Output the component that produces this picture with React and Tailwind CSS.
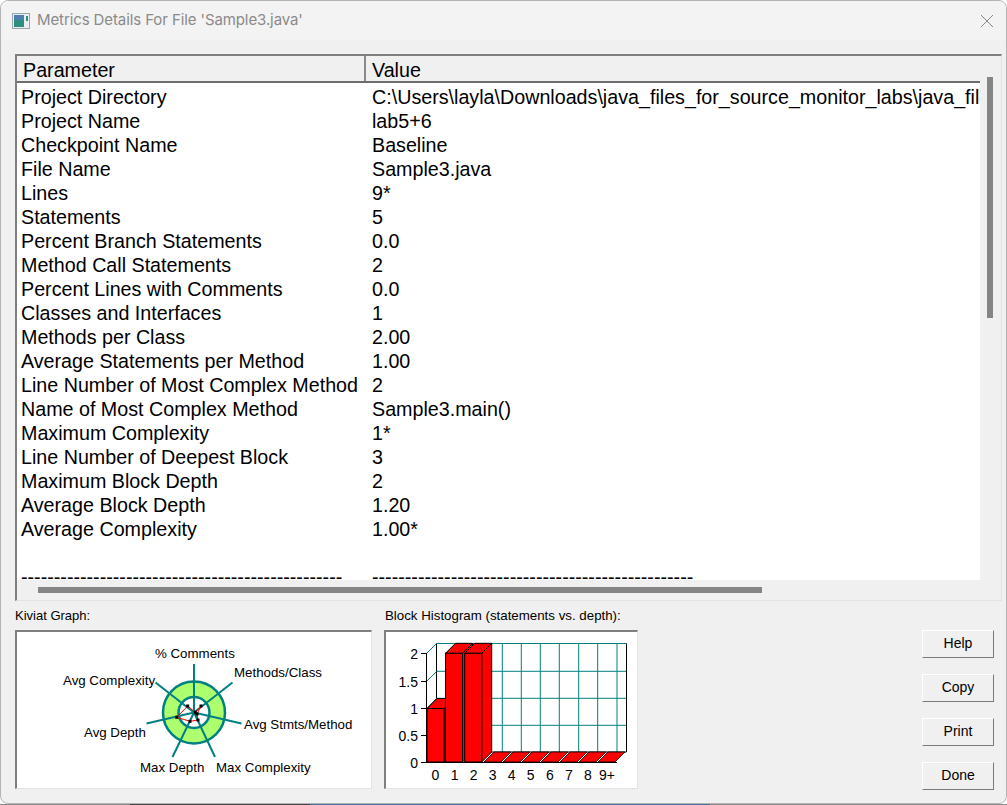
import React from "react";

const dashes = "-------------------------------------------------";

const rows = [
  ["Project Directory", "C:\\Users\\layla\\Downloads\\java_files_for_source_monitor_labs\\java_files_for_source_monitor_labs"],
  ["Project Name", "lab5+6"],
  ["Checkpoint Name", "Baseline"],
  ["File Name", "Sample3.java"],
  ["Lines", "9*"],
  ["Statements", "5"],
  ["Percent Branch Statements", "0.0"],
  ["Method Call Statements", "2"],
  ["Percent Lines with Comments", "0.0"],
  ["Classes and Interfaces", "1"],
  ["Methods per Class", "2.00"],
  ["Average Statements per Method", "1.00"],
  ["Line Number of Most Complex Method", "2"],
  ["Name of Most Complex Method", "Sample3.main()"],
  ["Maximum Complexity", "1*"],
  ["Line Number of Deepest Block", "3"],
  ["Maximum Block Depth", "2"],
  ["Average Block Depth", "1.20"],
  ["Average Complexity", "1.00*"],
  ["", ""],
  [dashes, dashes],
];

// spokes of the kiviat graph, page coordinates
const spokes = [
  [194, 664],
  [232.5, 682.5],
  [241.5, 723.5],
  [215, 757],
  [172.5, 757],
  [146.5, 723.5],
  [155.5, 682.5],
];

const kiviatLabels = [
  ["% Comments", 155, 658],
  ["Methods/Class", 234, 677],
  ["Avg Complexity", 63, 685],
  ["Avg Stmts/Method", 244, 729],
  ["Avg Depth", 84, 737],
  ["Max Depth", 140, 772],
  ["Max Complexity", 216, 772],
];

const redPoints = [
  [195.3, 712.3],
  [201, 706],
  [197, 714],
  [198, 720],
  [190, 721.3],
  [176.7, 717.3],
  [187.7, 706],
];

function Kiviat() {
  return (
    <svg viewBox="17 632 354 156" className="block w-[354px] h-[156px]">
      <circle cx="194" cy="712.5" r="31" fill="#adff70" stroke="#008080" strokeWidth="2.5" />
      <circle cx="194" cy="712.5" r="15.5" fill="#ffffff" stroke="#008080" strokeWidth="2.5" />
      {spokes.map(([x, y], i) => (
        <line key={i} x1="194" y1="712.5" x2={x} y2={y} stroke="#008080" strokeWidth="2" />
      ))}
      <polygon
        points={redPoints.map((p) => p.join(",")).join(" ")}
        fill="none"
        stroke="#ff0000"
        strokeWidth="1"
      />
      {redPoints.map(([x, y], i) => (
        <rect key={i} x={x - 1.5} y={y - 1.5} width="3" height="3" fill="#000000" />
      ))}
      {kiviatLabels.map(([t, x, y]) => (
        <text key={t} x={x} y={y} fontSize="13.3" fill="#000000" fontFamily="Liberation Sans, Arial, sans-serif">
          {t}
        </text>
      ))}
    </svg>
  );
}

const gridX = [502.3, 521.3, 540.3, 559.3, 578.7, 597.7, 617];
const gridY = [671.3, 698.3, 725.3];
const floorX = [484, 503, 522, 541, 560, 579, 598];

function Histogram() {
  const bars = [
    { x: 427, top: 708.5 },
    { x: 445.5, top: 653.3 },
    { x: 464.7, top: 653.3 },
  ];
  return (
    <svg viewBox="386 632 250 156" className="block w-[250px] h-[156px]">
      {/* back wall */}
      {gridX.map((x) => (
        <line key={x} x1={x} y1="643.5" x2={x} y2="752" stroke="#008080" />
      ))}
      {gridY.map((y) => (
        <line key={y} x1="436.5" y1={y} x2="626.5" y2={y} stroke="#008080" />
      ))}
      <line x1="436.5" y1="643.5" x2="626.5" y2="643.5" stroke="#008080" />
      <line x1="436.5" y1="643.5" x2="436.5" y2="752" stroke="#000000" />
      <line x1="626.5" y1="643.5" x2="626.5" y2="752" stroke="#000000" />
      <line x1="436.5" y1="752" x2="626.5" y2="752" stroke="#000000" />
      {/* left wall */}
      <line x1="426.5" y1="653.5" x2="436.5" y2="643.5" stroke="#008080" />
      <line x1="426.5" y1="681.5" x2="436.5" y2="671.5" stroke="#008080" />
      <line x1="426.5" y1="708.5" x2="436.5" y2="698.5" stroke="#008080" />
      <line x1="426.5" y1="735.5" x2="436.5" y2="725.5" stroke="#008080" />
      <line x1="426.5" y1="653" x2="426.5" y2="762.5" stroke="#000000" />
      {/* empty bars on the floor */}
      {floorX.map((x) => (
        <polygon
          key={x}
          points={`${x},762 ${x + 10},752 ${x + 27},752 ${x + 17},762`}
          fill="#ff0000"
          stroke="#000000"
          strokeWidth="0.8"
        />
      ))}
      {/* filled bars, each one covers the side of the one before */}
      {bars.map((b) => (
        <g key={b.x} stroke="#000000" strokeWidth="1" fill="#ff0000">
          <polygon points={`${b.x + 17},${b.top} ${b.x + 27},${b.top - 10} ${b.x + 27},752 ${b.x + 17},762`} />
          <polygon points={`${b.x},${b.top} ${b.x + 10},${b.top - 10} ${b.x + 27},${b.top - 10} ${b.x + 17},${b.top}`} />
          <rect x={b.x} y={b.top} width="17" height={762 - b.top} />
        </g>
      ))}
      {/* y axis */}
      {[
        ["2", 653.5],
        ["1.5", 681.5],
        ["1", 708.5],
        ["0.5", 735.5],
        ["0", 762.5],
      ].map(([t, y]) => (
        <g key={t}>
          <line x1="421" y1={y} x2="427" y2={y} stroke="#000000" />
          <text x="418" y={y + 5} textAnchor="end" fontSize="14" fill="#000000" fontFamily="Liberation Sans, Arial, sans-serif">
            {t}
          </text>
        </g>
      ))}
      {/* x axis */}
      <line x1="426.5" y1="762.5" x2="617" y2="762.5" stroke="#000000" />
      {["0", "1", "2", "3", "4", "5", "6", "7", "8", "9+"].map((t, i) => (
        <text
          key={t}
          x={435.5 + i * 19.05}
          y="780"
          textAnchor="middle"
          fontSize="14"
          fill="#000000"
          fontFamily="Liberation Sans, Arial, sans-serif"
        >
          {t}
        </text>
      ))}
    </svg>
  );
}

function DialogButton({ children }) {
  return (
    <button className="w-[72px] h-[28px] bg-[#f0f0f0] border border-t-white border-l-white border-r-[#7a7a7a] border-b-[#7a7a7a] text-[14px] text-black leading-none pb-[2px]">
      {children}
    </button>
  );
}

export default function App() {
  return (
    <div className="h-[805px] w-[1007px] overflow-hidden bg-white font-['Liberation_Sans',Arial,sans-serif] text-black">
      <div className="h-[804px] w-[1007px] rounded-lg border border-[#b4b4b4] bg-[#f0f0f0] overflow-hidden flex flex-col">
        {/* title bar */}
        <div className="h-[39px] shrink-0 bg-[#f3f3f3] flex items-center justify-between pl-[11px] pr-[12px]">
          <div className="flex items-center gap-[7px]">
            <svg width="18" height="16" viewBox="0 0 18 16" className="block">
              <rect x="0.5" y="0.5" width="17" height="15" fill="#e8eef2" stroke="#9aa6ae" />
              <rect x="2" y="2" width="10" height="12" fill="#2f8f7f" />
              <rect x="2" y="2" width="10" height="5" fill="#4f7fae" />
              <rect x="14" y="3" width="2" height="5" fill="#2f8f7f" />
            </svg>
            <span className="text-[15px] text-[#8a8a8a] font-['Inter','Noto_Sans',sans-serif] tracking-[-0.1px]">
              Metrics Details For File 'Sample3.java'
            </span>
          </div>
          <svg width="14" height="14" viewBox="0 0 14 14" className="block">
            <path d="M1 1 L13 13 M13 1 L1 13" stroke="#8a8a8a" strokeWidth="1" fill="none" />
          </svg>
        </div>

        <div className="flex-1 flex flex-col pl-[14px] pr-[5px] pt-[14px]">
          {/* metrics list */}
          <div className="relative h-[547px] w-[987px] border-2 border-b border-r border-t-[#7f7f7f] border-l-[#7f7f7f] border-b-[#e3e3e3] border-r-[#e3e3e3] bg-[#f0f0f0] shrink-0">
            <div className="w-[963px] h-[524px] bg-white overflow-hidden">
              <div className="h-[27px] flex bg-[#f0f0f0] border-b-2 border-[#6e6e6e] text-[19.7px] leading-[29px]">
                <div className="w-[349px] pl-[6px] border-r-2 border-[#8a8a8a]">Parameter</div>
                <div className="pl-[6px]">Value</div>
              </div>
              <div className="pt-[2px]">
                {rows.map(([name, value], i) => (
                  <div key={i} className="h-[24px] flex text-[19.7px] leading-[24px] whitespace-nowrap">
                    <div className="w-[351px] shrink-0 pl-[4px]">{name}</div>
                    <div className="pl-[4px]">{value}</div>
                  </div>
                ))}
              </div>
            </div>
            {/* scrollbars */}
            <div className="absolute left-[970px] top-[21px] w-[6px] h-[241px] bg-[#858585]" />
            <div className="absolute left-[21px] top-[531px] w-[724px] h-[6px] bg-[#858585]" />
          </div>

          {/* lower part */}
          <div className="flex mt-[7px]">
            <div className="w-[369px]">
              <div className="text-[13px] leading-[15px] mb-[7px]">Kiviat Graph:</div>
              <div className="w-[357px] h-[159px] border-2 border-b border-r border-t-[#7f7f7f] border-l-[#7f7f7f] border-b-[#e3e3e3] border-r-[#e3e3e3] bg-white">
                <Kiviat />
              </div>
            </div>
            <div className="w-[538px]">
              <div className="text-[13.3px] leading-[15px] mb-[7px] pl-[1px]">Block Histogram (statements vs. depth):</div>
              <div className="w-[254px] h-[159px] border-2 border-b border-r border-t-[#7f7f7f] border-l-[#7f7f7f] border-b-[#e3e3e3] border-r-[#e3e3e3] bg-white">
                <Histogram />
              </div>
            </div>
            <div className="flex flex-col gap-[16px] pt-[22px]">
              <DialogButton>Help</DialogButton>
              <DialogButton>Copy</DialogButton>
              <DialogButton>Print</DialogButton>
              <DialogButton>Done</DialogButton>
            </div>
          </div>
        </div>
      </div>
      {/* what shows of the page behind the dialog */}
      <div className="h-px flex">
        <div className="w-[130px] bg-[#8a8a8a]" />
        <div className="w-[180px] bg-[#444444]" />
        <div className="w-[400px] bg-[#3f6f9f]" />
        <div className="flex-1 bg-[#8a8a8a]" />
      </div>
    </div>
  );
}
